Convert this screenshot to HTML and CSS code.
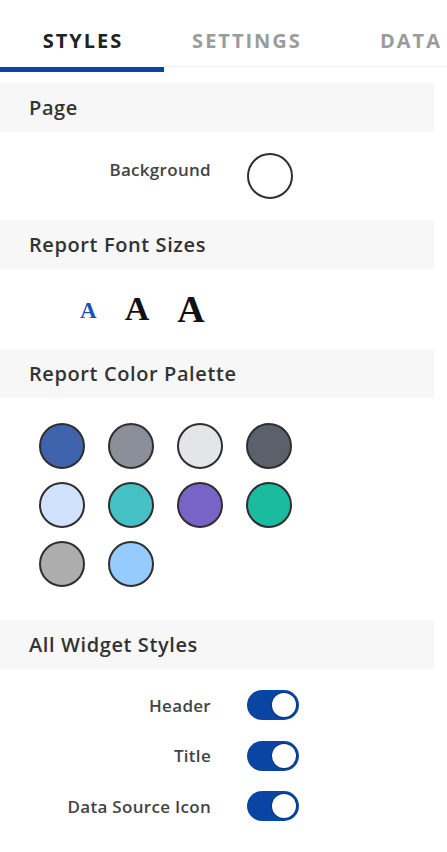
FILE: index.html
```html
<!DOCTYPE html>
<html lang="en">
<head>
    <meta charset="UTF-8">
    <meta name="viewport" content="width=device-width, initial-scale=1.0">
    <title>Report Styles</title>
    <link rel="stylesheet" href="styles.css">
</head>
<body>

    <nav class="tabs">
        <div class="tab active">STYLES</div>
        <div class="tab">SETTINGS</div>
        <div class="tab">DATA</div>
    </nav>

    <div class="panel">
        <div class="section-head">Page</div>
        <div class="field-row bg-row">
            <span class="field-label raised">Background</span>
            <span class="swatch swatch-white"></span>
        </div>

        <div class="section-head">Report Font Sizes</div>
        <div class="font-sizes">
            <span class="size-a small selected">A</span>
            <span class="size-a medium">A</span>
            <span class="size-a large">A</span>
        </div>

        <div class="section-head">Report Color Palette</div>
        <div class="palette">
            <span class="swatch" style="background: #3f63ad;"></span>
            <span class="swatch" style="background: #8b8f99;"></span>
            <span class="swatch" style="background: #e4e5e8;"></span>
            <span class="swatch" style="background: #5b616b;"></span>
            <span class="swatch" style="background: #d0e2fd;"></span>
            <span class="swatch" style="background: #45c1c6;"></span>
            <span class="swatch" style="background: #7864c6;"></span>
            <span class="swatch" style="background: #1bbba0;"></span>
            <span class="swatch" style="background: #adadad;"></span>
            <span class="swatch" style="background: #95cbfd;"></span>
        </div>

        <div class="section-head">All Widget Styles</div>
        <div class="toggles">
            <div class="field-row">
                <span class="field-label">Header</span>
                <span class="toggle on"><span class="knob"></span></span>
            </div>
            <div class="field-row">
                <span class="field-label">Title</span>
                <span class="toggle on"><span class="knob"></span></span>
            </div>
            <div class="field-row">
                <span class="field-label">Data Source Icon</span>
                <span class="toggle on"><span class="knob"></span></span>
            </div>
        </div>
    </div>

</body>
</html>
```

FILE: styles.css
```css
body {
    font-family: 'Open Sans', Lato, sans-serif;
    margin: 0;
    padding: 0;
    width: 447px;
    overflow: hidden;
    background-color: #fff;
    color: #333;
}

.tabs {
    display: flex;
    height: 72px;
    overflow: hidden;
}

.tab {
    flex: 0 0 164px;
    box-sizing: border-box;
    height: 72px;
    padding-top: 13px;
    padding-left: 2px; /* balances the trailing letter-spacing */
    border-bottom: 5px solid transparent;
    display: flex;
    align-items: center;
    justify-content: center;
    font-size: 20px;
    font-weight: bold;
    letter-spacing: 2px;
    color: #9b9b9b;
    box-shadow: inset 0 -1px 0 #f0f0f0;
}

.tab.active {
    color: #222;
    border-bottom-color: #0b44a6;
    box-shadow: none;
}

.panel {
    padding-top: 11px;
}

.section-head {
    width: 434px;
    height: 49px;
    box-sizing: border-box;
    padding-left: 29px;
    display: flex;
    align-items: center;
    background-color: #f7f7f7;
    font-size: 20px;
    font-weight: 600;
    letter-spacing: 0.6px;
    color: #333;
}

.field-row {
    display: grid;
    grid-template-columns: 211px auto;
    column-gap: 36px;
    align-items: center;
}

.field-label {
    text-align: right;
    font-size: 17px;
    font-weight: 600;
    letter-spacing: 0.3px;
    color: #444;
}

.field-label.raised {
    margin-bottom: 14px;
}

.bg-row {
    height: 88px;
}

.swatch {
    display: block;
    width: 46px;
    height: 46px;
    box-sizing: border-box;
    border: 2px solid #2f2f2f;
    border-radius: 50%;
}

.swatch-white {
    background: #fff;
}

.font-sizes {
    height: 80px;
    box-sizing: border-box;
    padding-left: 80px;
    display: flex;
    align-items: center;
    gap: 28px;
    font-family: 'Liberation Serif', serif;
    font-weight: bold;
    color: #111;
}

.size-a {
    line-height: 1;
}

.size-a.small {
    font-size: 23px;
    margin-top: 2px;
}

.size-a.medium {
    font-size: 34px;
}

.size-a.large {
    font-size: 38px;
}

.size-a.selected {
    color: #1c4fb8;
}

.palette {
    display: grid;
    grid-template-columns: repeat(4, 46px);
    column-gap: 23px;
    row-gap: 13px;
    padding: 25px 0 33px 39px;
}

.toggles {
    display: flex;
    flex-direction: column;
    gap: 20.5px;
    padding-top: 21px;
}

.toggle {
    display: flex;
    justify-content: flex-end;
    align-items: center;
    width: 52px;
    height: 30px;
    box-sizing: border-box;
    padding: 3px;
    border-radius: 15px;
    background: #0b45a3;
}

.knob {
    width: 24px;
    height: 24px;
    border-radius: 50%;
    background: #fff;
    box-shadow: 0 0 0 1px #08367f;
}
```
